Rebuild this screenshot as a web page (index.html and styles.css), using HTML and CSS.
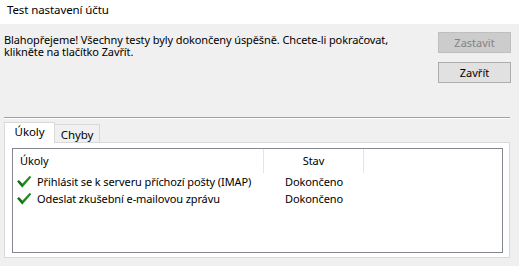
FILE: index.html
```html
<!DOCTYPE html>
<html lang="cs">
<head>
<meta charset="utf-8">
<link rel="stylesheet" href="styles.css">
</head>
<body>
<div class="window">
  <div class="titlebar">Test nastavení účtu</div>
  <div class="top">
    <p class="message">Blahopřejeme! Všechny testy byly dokončeny úspěšně. Chcete-li pokračovat, klikněte na tlačítko Zavřít.</p>
    <div class="buttons">
      <button class="btn btn-disabled" disabled>Zastavit</button>
      <button class="btn">Zavřít</button>
    </div>
  </div>
  <div class="separator"></div>
  <div class="tabs">
    <div class="tab tab-active">Úkoly</div>
    <div class="tab tab-inactive">Chyby</div>
  </div>
  <div class="panel">
    <div class="listview">
      <div class="lv-header">
        <div class="col col-task">Úkoly</div>
        <div class="col col-status">Stav</div>
      </div>
      <div class="lv-row">
        <div class="col col-task">
          <svg class="check" viewBox="0 0 16 16" width="16" height="16"><path d="M1.2 7.6 L3 6.2 L6.3 9.8 L13.8 1.8 L15.2 3.2 L6.4 13.4 Z" fill="#1c8a1c"/><path d="M1.2 7.6 L3 6.2 L6.3 9.8 L6.4 13.4 Z" fill="#147014"/></svg>
          <span>Přihlásit se k serveru příchozí pošty (IMAP)</span>
        </div>
        <div class="col col-status">Dokončeno</div>
      </div>
      <div class="lv-row">
        <div class="col col-task">
          <svg class="check" viewBox="0 0 16 16" width="16" height="16"><path d="M1.2 7.6 L3 6.2 L6.3 9.8 L13.8 1.8 L15.2 3.2 L6.4 13.4 Z" fill="#1c8a1c"/><path d="M1.2 7.6 L3 6.2 L6.3 9.8 L6.4 13.4 Z" fill="#147014"/></svg>
          <span>Odeslat zkušební e-mailovou zprávu</span>
        </div>
        <div class="col col-status">Dokončeno</div>
      </div>
    </div>
  </div>
</div>
</body>
</html>
```
FILE: styles.css
```css
* { box-sizing: border-box; }
html, body { margin: 0; padding: 0; }
body {
  width: 519px;
  height: 266px;
  background: #f0f0f0;
  font-family: "Noto Sans", "DejaVu Sans", sans-serif;
  font-size: 11px;
  letter-spacing: -0.1px;
  color: #000;
  overflow: hidden;
}
.window { width: 519px; height: 266px; }
.titlebar {
  height: 24px;
  background: #fff;
  padding: 2px 0 0 7px;
  line-height: 16px;
  font-size: 11.5px;
}
.top {
  height: 93px;
  display: flex;
  padding: 8px 8px 0 4px;
}
.message {
  flex: 1;
  margin: 0;
  padding-top: 2px;
  line-height: 12px;
}
.message-inner { display: block; }
.message { max-width: 400px; margin-right: 35px; }
.buttons {
  display: flex;
  flex-direction: column;
  gap: 9px;
  width: 73px;
  margin-left: auto;
}
.btn {
  height: 21px;
  width: 73px;
  font: inherit;
  padding: 0;
  background: #e1e1e1;
  border: 1px solid #adadad;
  color: #000;
}
.btn-disabled {
  background: #cccccc;
  border-color: #bfbfbf;
  color: #838383;
}
.separator {
  margin: 0 9px 0 4px;
  height: 2px;
  border-top: 1px solid #a0a0a0;
  border-bottom: 1px solid #fff;
}
.tabs {
  display: flex;
  align-items: flex-end;
  margin-top: 3px;
  padding-left: 4px;
  height: 20px;
  position: relative;
  z-index: 1;
}
.tab {
  display: flex;
  align-items: center;
  justify-content: center;
}
.tab-active {
  width: 51px;
  height: 21px;
  margin-bottom: -1px;
  background: #fff;
  border: 1px solid #d9d9d9;
  border-bottom: none;
  padding-bottom: 3px;
  font-size: 11.5px;
}
.tab-inactive {
  width: 45px;
  height: 18px;
  background: #f0f0f0;
  border: 1px solid #d9d9d9;
  border-left: none;
  border-bottom: none;
  padding-top: 1px;
  font-size: 11.5px;
}
.panel {
  margin: 0 9px 0 4px;
  height: 116px;
  background: #fff;
  border: 1px solid #d9d9d9;
  padding: 5px 6px 4px 7px;
}
.listview {
  height: 105px;
  border: 1px solid #828790;
  background: #fff;
}
.lv-header {
  display: flex;
  height: 24px;
}
.lv-header .col {
  display: flex;
  align-items: center;
  border-right: 1px solid #e5e5e5;
  padding-bottom: 1px;
}
.col-task { width: 251px; padding-left: 7px; }
.col-status { width: 100px; justify-content: center; }
.lv-row {
  display: flex;
  height: 17px;
  align-items: center;
}
.lv-row .col { display: flex; align-items: center; white-space: nowrap; }
.lv-row .col-task { padding-left: 3px; }
.check { flex: none; margin-right: 5px; }
```
